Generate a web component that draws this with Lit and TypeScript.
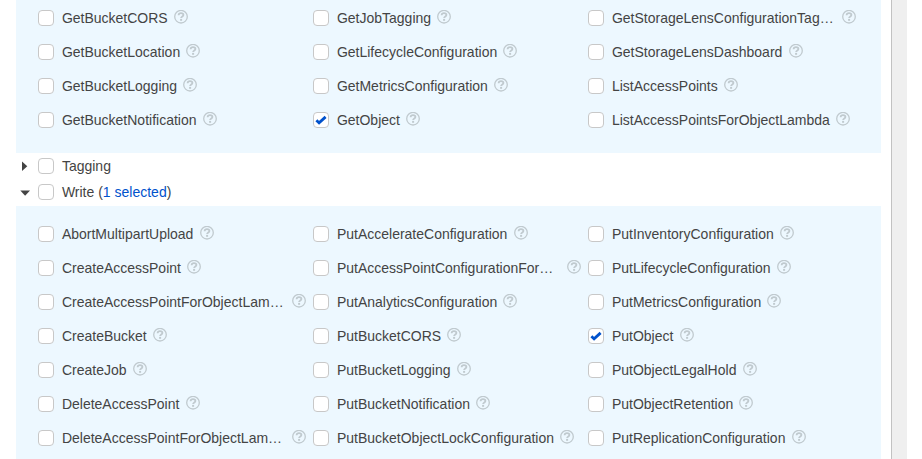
import { LitElement, html, css, svg, nothing } from "lit";
import { customElement, property } from "lit/decorators.js";

const READ_ACTIONS = [
  "GetBucketCORS", "GetJobTagging", "GetStorageLensConfigurationTag…",
  "GetBucketLocation", "GetLifecycleConfiguration", "GetStorageLensDashboard",
  "GetBucketLogging", "GetMetricsConfiguration", "ListAccessPoints",
  "GetBucketNotification", "GetObject", "ListAccessPointsForObjectLambda",
];

const WRITE_ACTIONS = [
  "AbortMultipartUpload", "PutAccelerateConfiguration", "PutInventoryConfiguration",
  "CreateAccessPoint", "PutAccessPointConfigurationFor…", "PutLifecycleConfiguration",
  "CreateAccessPointForObjectLam…", "PutAnalyticsConfiguration", "PutMetricsConfiguration",
  "CreateBucket", "PutBucketCORS", "PutObject",
  "CreateJob", "PutBucketLogging", "PutObjectLegalHold",
  "DeleteAccessPoint", "PutBucketNotification", "PutObjectRetention",
  "DeleteAccessPointForObjectLam…", "PutBucketObjectLockConfiguration", "PutReplicationConfiguration",
];

const SELECTED = new Set(["GetObject", "PutObject"]);

@customElement("check-box")
class CheckBox extends LitElement {
  @property({ type: Boolean }) checked = false;

  static styles = css`
    :host {
      display: block;
      flex: none;
      box-sizing: border-box;
      width: 16px;
      height: 16px;
      border: 1px solid #c8c8c8;
      border-radius: 4px;
      background: #fff;
    }
    svg { display: block; width: 14px; height: 14px; }
  `;

  render() {
    return this.checked
      ? html`<svg viewBox="0 0 14 14">${svg`<path d="M2.4 7.2 L5.1 9.9 L11.6 3.9" fill="none" stroke="#0052cc" stroke-width="2.8"/>`}</svg>`
      : nothing;
  }
}

@customElement("action-item")
class ActionItem extends LitElement {
  @property() name = "";
  @property({ type: Boolean }) checked = false;

  static styles = css`
    :host { display: flex; align-items: center; height: 34px; min-width: 0; }
    .label {
      margin-left: 7.9px;
      white-space: nowrap;
      line-height: 20px;
      transform: scaleY(1.08);
      transform-origin: 0 75%;
    }
    .label.long { width: 223.5px; }
    .help { flex: none; width: 14px; height: 14px; margin: 0 0 3px 6.2px; }
  `;

  render() {
    return html`
      <check-box ?checked=${this.checked}></check-box>
      <span class="label ${this.name.endsWith("…") ? "long" : ""}">${this.name}</span>
      <svg class="help" viewBox="0 0 14 14" fill="none" stroke="#c0cacf">
        <circle cx="7" cy="6.7" r="6.3" stroke-width="1.3" />
        <path d="M4.6 5.2 C4.7 3.8 5.7 3.2 7 3.2 C8.5 3.2 9.4 3.9 9.4 4.9 C9.4 6.5 7.1 6.4 7.1 8.1" stroke-width="1.8" />
        <path d="M7.1 8.9 V10.8" stroke-width="2" />
      </svg>
    `;
  }
}

@customElement("app-root")
class AppRoot extends LitElement {
  static styles = css`
    :host {
      display: flex;
      box-sizing: border-box;
      width: 922px;
      height: 459px;
      overflow: hidden;
      background: #fff;
      color: #444;
      font: 14px "Liberation Sans", Arial, sans-serif;
    }
    .content { box-sizing: border-box; width: 891px; flex: none; padding: 0 10px 0 16px; }
    .rail { box-sizing: border-box; width: 16px; flex: none; border-left: 1px solid #c2c2c2; background: #efefef; }
    .panel {
      display: grid;
      grid-template-columns: repeat(3, 275px);
      padding: 1px 0 16px 22px;
      background: #edf8ff;
    }
    .panel.write { padding: 11px 0 16px 22px; }
    .groups { padding: 0 0 1px; }
    .group { display: flex; align-items: center; height: 26px; }
    .arrow { flex: none; width: 16px; height: 10px; margin-right: 6px; fill: #444; }
    .title { margin-left: 7.9px; line-height: 20px; transform: scaleY(1.08); transform-origin: 0 75%; }
    .count { color: #0052cc; }
  `;

  private panel(actions: string[], kind: string) {
    return html`<div class="panel ${kind}">
      ${actions.map((name) => html`<action-item .name=${name} ?checked=${SELECTED.has(name)}></action-item>`)}
    </div>`;
  }

  render() {
    return html`
      <div class="content">
        ${this.panel(READ_ACTIONS, "read")}
        <div class="groups">
          <div class="group">
            <svg class="arrow" viewBox="0 0 16 10"><path d="M6 0.5 L11.3 5.3 L6 10 Z" /></svg>
            <check-box></check-box>
            <span class="title">Tagging</span>
          </div>
          <div class="group">
            <svg class="arrow" viewBox="0 0 16 10"><path d="M4.3 3.5 H14 L9.1 8.7 Z" /></svg>
            <check-box></check-box>
            <span class="title">Write (<span class="count">1 selected</span>)</span>
          </div>
        </div>
        ${this.panel(WRITE_ACTIONS, "write")}
      </div>
      <div class="rail"></div>
    `;
  }
}
